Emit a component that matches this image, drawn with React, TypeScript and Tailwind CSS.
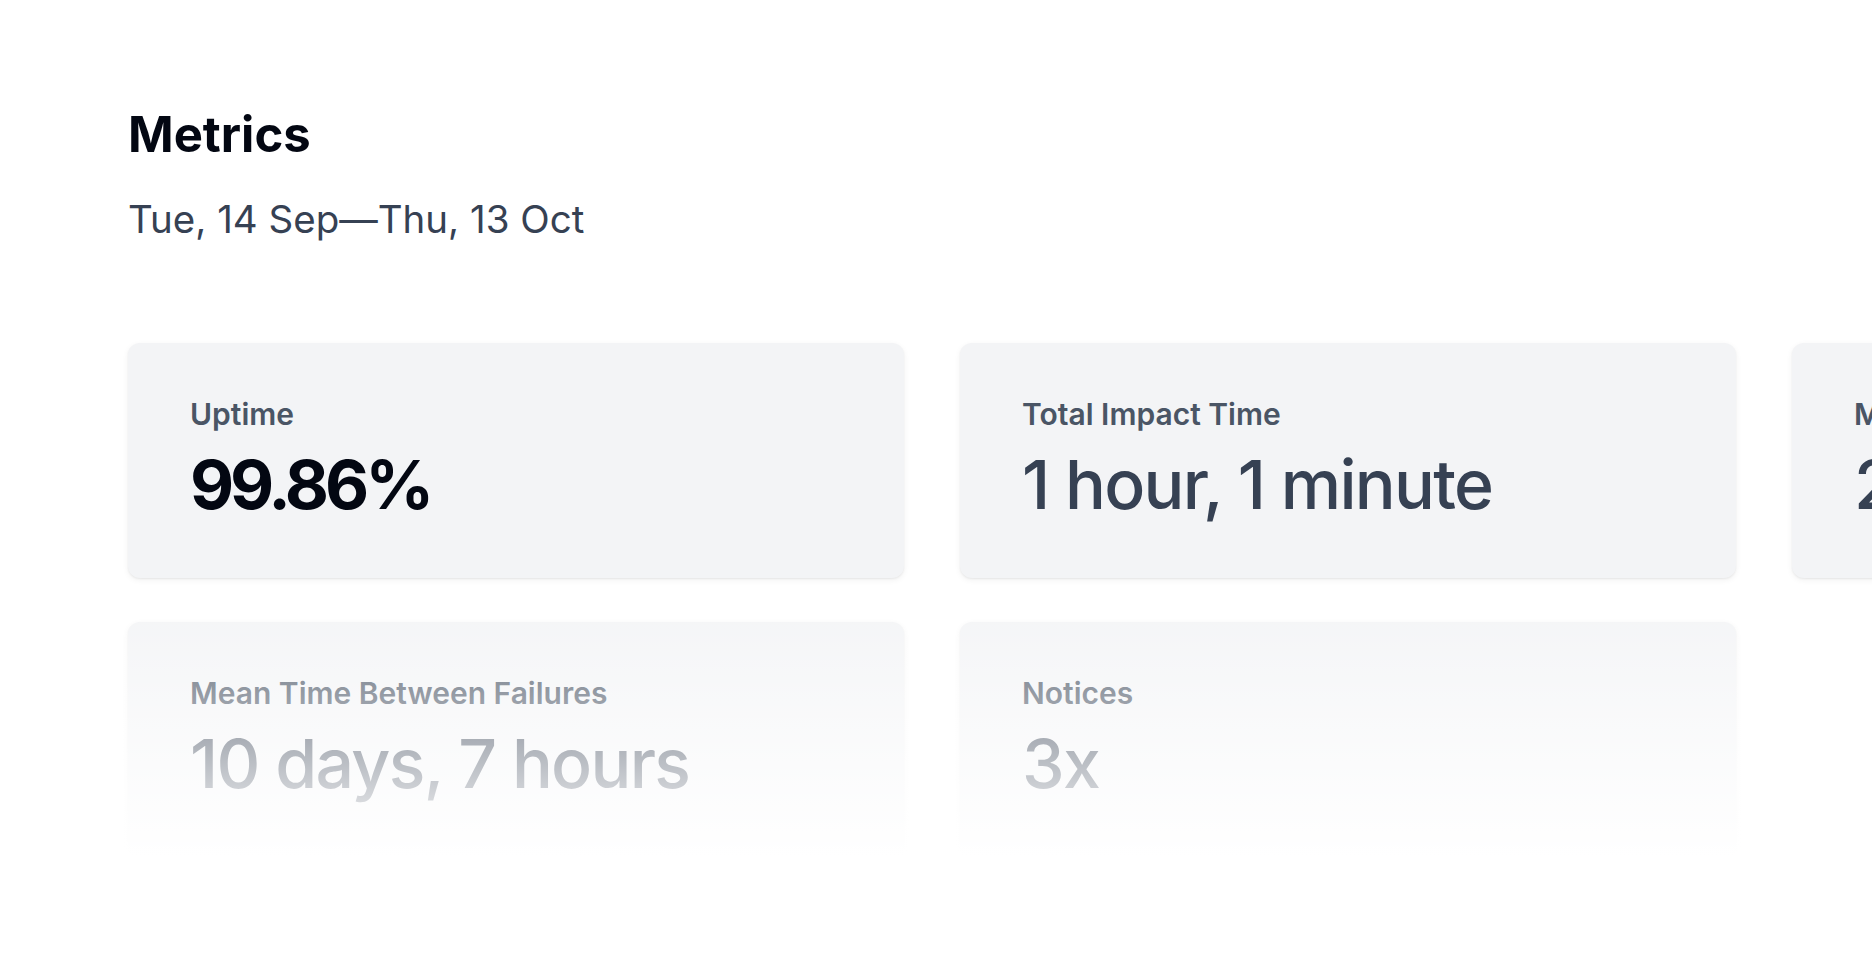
const metrics = [
  { label: "Uptime", value: "99.86%", strong: true },
  { label: "Total Impact Time", value: "1 hour, 1 minute" },
  { label: "Mean Time To Recovery", value: "20 minutes" },
  { label: "Mean Time Between Failures", value: "10 days, 7 hours" },
  { label: "Notices", value: "3x" },
];

function MetricCard({ label, value, strong }: { label: string; value: string; strong?: boolean }) {
  return (
    <div className="w-[776px] h-[235px] shrink-0 rounded-xl bg-gray-100 shadow-[0_1px_2px_rgba(0,0,0,0.06),0_2px_6px_rgba(0,0,0,0.06)] px-[62px] pt-[53px] flex flex-col gap-[18px]">
      <div className="text-[30px] leading-9 font-semibold text-gray-600 whitespace-nowrap">{label}</div>
      <div
        className={
          strong
            ? "text-[68px] leading-none font-bold text-gray-950 tracking-[-0.06em] whitespace-nowrap"
            : "text-[68px] leading-none font-medium text-gray-700 tracking-[-0.025em] whitespace-nowrap"
        }
      >
        {value}
      </div>
    </div>
  );
}

export default function App() {
  return (
    <div className="w-full h-[960px] overflow-hidden bg-white font-['Inter',sans-serif]">
      <div className="pl-32 pt-[110px]">
        <h1 className="text-[49px] leading-none font-bold text-gray-950">Metrics</h1>
        <p className="mt-[40px] text-[38.5px] leading-10 text-gray-700">Tue, 14 Sep—Thu, 13 Oct</p>

        <div className="relative mt-[104px] w-max">
          <div className="grid grid-cols-[repeat(3,776px)] gap-x-14 gap-y-11">
            {metrics.map((m) => (
              <MetricCard key={m.label} {...m} />
            ))}
          </div>
          {/* fade over the second row */}
          <div className="absolute left-[-8px] right-0 top-[277px] h-[270px] bg-linear-to-b from-white/15 from-0% to-white to-88%" />
        </div>
      </div>
    </div>
  );
}
